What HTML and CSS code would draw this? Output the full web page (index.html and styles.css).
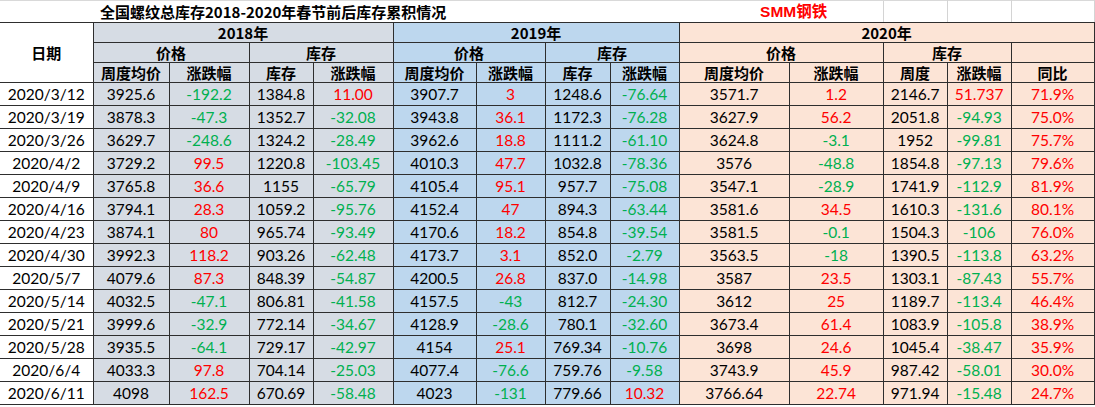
FILE: index.html
```html
<!DOCTYPE html>
<html lang="zh-CN">
<head>
<meta charset="utf-8">
<title>全国螺纹总库存2018-2020年春节前后库存累积情况</title>
<link rel="stylesheet" href="styles.css">
</head>
<body>
<table class="sheet">
  <colgroup>
    <col class="c-date">
    <col class="c1"><col class="c2"><col class="c3"><col class="c4">
    <col class="c5"><col class="c6"><col class="c7"><col class="c8">
    <col class="c9"><col class="c10"><col class="c11"><col class="c12"><col class="c13">
  </colgroup>
  <thead>
    <tr class="r-title">
      <td class="t-blank"></td>
      <td class="t-title" colspan="8">全国螺纹总库存2018-2020年春节前后库存累积情况</td>
      <td class="t-brand" colspan="2">SMM钢铁</td>
      <td class="t-grid"></td>
      <td class="t-grid"></td>
      <td class="t-grid"></td>
    </tr>
    <tr class="r-head">
      <th class="h-date" rowspan="3">日期</th>
      <th class="y18" colspan="4">2018年</th>
      <th class="y19" colspan="4">2019年</th>
      <th class="y20" colspan="5">2020年</th>
    </tr>
    <tr class="r-head">
      <th class="y18" colspan="2">价格</th>
      <th class="y18" colspan="2">库存</th>
      <th class="y19" colspan="2">价格</th>
      <th class="y19" colspan="2">库存</th>
      <th class="y20" colspan="2">价格</th>
      <th class="y20" colspan="2">库存</th>
      <th class="y20"></th>
    </tr>
    <tr class="r-head">
      <th class="y18">周度均价</th><th class="y18">涨跌幅</th><th class="y18">库存</th><th class="y18">涨跌幅</th>
      <th class="y19">周度均价</th><th class="y19">涨跌幅</th><th class="y19">库存</th><th class="y19">涨跌幅</th>
      <th class="y20">周度均价</th><th class="y20">涨跌幅</th><th class="y20">周度</th><th class="y20">涨跌幅</th><th class="y20">同比</th>
    </tr>
  </thead>
  <tbody>
    <tr><td class="d">2020/3/12</td><td class="y18">3925.6</td><td class="y18 dn">-192.2</td><td class="y18">1384.8</td><td class="y18 up">11.00</td><td class="y19">3907.7</td><td class="y19 up">3</td><td class="y19">1248.6</td><td class="y19 dn">-76.64</td><td class="y20">3571.7</td><td class="y20 up">1.2</td><td class="y20">2146.7</td><td class="y20 up">51.737</td><td class="y20 up">71.9%</td></tr>
    <tr><td class="d">2020/3/19</td><td class="y18">3878.3</td><td class="y18 dn">-47.3</td><td class="y18">1352.7</td><td class="y18 dn">-32.08</td><td class="y19">3943.8</td><td class="y19 up">36.1</td><td class="y19">1172.3</td><td class="y19 dn">-76.28</td><td class="y20">3627.9</td><td class="y20 up">56.2</td><td class="y20">2051.8</td><td class="y20 dn">-94.93</td><td class="y20 up">75.0%</td></tr>
    <tr><td class="d">2020/3/26</td><td class="y18">3629.7</td><td class="y18 dn">-248.6</td><td class="y18">1324.2</td><td class="y18 dn">-28.49</td><td class="y19">3962.6</td><td class="y19 up">18.8</td><td class="y19">1111.2</td><td class="y19 dn">-61.10</td><td class="y20">3624.8</td><td class="y20 dn">-3.1</td><td class="y20">1952</td><td class="y20 dn">-99.81</td><td class="y20 up">75.7%</td></tr>
    <tr><td class="d">2020/4/2</td><td class="y18">3729.2</td><td class="y18 up">99.5</td><td class="y18">1220.8</td><td class="y18 dn">-103.45</td><td class="y19">4010.3</td><td class="y19 up">47.7</td><td class="y19">1032.8</td><td class="y19 dn">-78.36</td><td class="y20">3576</td><td class="y20 dn">-48.8</td><td class="y20">1854.8</td><td class="y20 dn">-97.13</td><td class="y20 up">79.6%</td></tr>
    <tr><td class="d">2020/4/9</td><td class="y18">3765.8</td><td class="y18 up">36.6</td><td class="y18">1155</td><td class="y18 dn">-65.79</td><td class="y19">4105.4</td><td class="y19 up">95.1</td><td class="y19">957.7</td><td class="y19 dn">-75.08</td><td class="y20">3547.1</td><td class="y20 dn">-28.9</td><td class="y20">1741.9</td><td class="y20 dn">-112.9</td><td class="y20 up">81.9%</td></tr>
    <tr><td class="d">2020/4/16</td><td class="y18">3794.1</td><td class="y18 up">28.3</td><td class="y18">1059.2</td><td class="y18 dn">-95.76</td><td class="y19">4152.4</td><td class="y19 up">47</td><td class="y19">894.3</td><td class="y19 dn">-63.44</td><td class="y20">3581.6</td><td class="y20 up">34.5</td><td class="y20">1610.3</td><td class="y20 dn">-131.6</td><td class="y20 up">80.1%</td></tr>
    <tr><td class="d">2020/4/23</td><td class="y18">3874.1</td><td class="y18 up">80</td><td class="y18">965.74</td><td class="y18 dn">-93.49</td><td class="y19">4170.6</td><td class="y19 up">18.2</td><td class="y19">854.8</td><td class="y19 dn">-39.54</td><td class="y20">3581.5</td><td class="y20 dn">-0.1</td><td class="y20">1504.3</td><td class="y20 dn">-106</td><td class="y20 up">76.0%</td></tr>
    <tr><td class="d">2020/4/30</td><td class="y18">3992.3</td><td class="y18 up">118.2</td><td class="y18">903.26</td><td class="y18 dn">-62.48</td><td class="y19">4173.7</td><td class="y19 up">3.1</td><td class="y19">852.0</td><td class="y19 dn">-2.79</td><td class="y20">3563.5</td><td class="y20 dn">-18</td><td class="y20">1390.5</td><td class="y20 dn">-113.8</td><td class="y20 up">63.2%</td></tr>
    <tr><td class="d">2020/5/7</td><td class="y18">4079.6</td><td class="y18 up">87.3</td><td class="y18">848.39</td><td class="y18 dn">-54.87</td><td class="y19">4200.5</td><td class="y19 up">26.8</td><td class="y19">837.0</td><td class="y19 dn">-14.98</td><td class="y20">3587</td><td class="y20 up">23.5</td><td class="y20">1303.1</td><td class="y20 dn">-87.43</td><td class="y20 up">55.7%</td></tr>
    <tr><td class="d">2020/5/14</td><td class="y18">4032.5</td><td class="y18 dn">-47.1</td><td class="y18">806.81</td><td class="y18 dn">-41.58</td><td class="y19">4157.5</td><td class="y19 dn">-43</td><td class="y19">812.7</td><td class="y19 dn">-24.30</td><td class="y20">3612</td><td class="y20 up">25</td><td class="y20">1189.7</td><td class="y20 dn">-113.4</td><td class="y20 up">46.4%</td></tr>
    <tr><td class="d">2020/5/21</td><td class="y18">3999.6</td><td class="y18 dn">-32.9</td><td class="y18">772.14</td><td class="y18 dn">-34.67</td><td class="y19">4128.9</td><td class="y19 dn">-28.6</td><td class="y19">780.1</td><td class="y19 dn">-32.60</td><td class="y20">3673.4</td><td class="y20 up">61.4</td><td class="y20">1083.9</td><td class="y20 dn">-105.8</td><td class="y20 up">38.9%</td></tr>
    <tr><td class="d">2020/5/28</td><td class="y18">3935.5</td><td class="y18 dn">-64.1</td><td class="y18">729.17</td><td class="y18 dn">-42.97</td><td class="y19">4154</td><td class="y19 up">25.1</td><td class="y19">769.34</td><td class="y19 dn">-10.76</td><td class="y20">3698</td><td class="y20 up">24.6</td><td class="y20">1045.4</td><td class="y20 dn">-38.47</td><td class="y20 up">35.9%</td></tr>
    <tr><td class="d">2020/6/4</td><td class="y18">4033.3</td><td class="y18 up">97.8</td><td class="y18">704.14</td><td class="y18 dn">-25.03</td><td class="y19">4077.4</td><td class="y19 dn">-76.6</td><td class="y19">759.76</td><td class="y19 dn">-9.58</td><td class="y20">3743.9</td><td class="y20 up">45.9</td><td class="y20">987.42</td><td class="y20 dn">-58.01</td><td class="y20 up">30.0%</td></tr>
    <tr><td class="d">2020/6/11</td><td class="y18">4098</td><td class="y18 up">162.5</td><td class="y18">670.69</td><td class="y18 dn">-58.48</td><td class="y19">4023</td><td class="y19 dn">-131</td><td class="y19">779.66</td><td class="y19 up">10.32</td><td class="y20">3766.64</td><td class="y20 up">22.74</td><td class="y20">971.94</td><td class="y20 dn">-15.48</td><td class="y20 up">24.7%</td></tr>
  </tbody>
</table>
</body>
</html>
```

FILE: styles.css
```css
html, body {
  margin: 0;
  padding: 0;
  background: #ffffff;
}

.sheet {
  border-collapse: collapse;
  table-layout: fixed;
  width: 1094px;
  font-family: "Lato", "Noto Sans CJK SC", sans-serif;
  font-size: 15px;
  color: #000;
}

.c-date { width: 93px; }
.c1 { width: 76px; }
.c2 { width: 80px; }
.c3 { width: 64px; }
.c4 { width: 80px; }
.c5 { width: 83px; }
.c6 { width: 69px; }
.c7 { width: 65px; }
.c8 { width: 69px; }
.c9 { width: 110px; }
.c10 { width: 94px; }
.c11 { width: 64px; }
.c12 { width: 64px; }
.c13 { width: 83px; }

.sheet td,
.sheet th {
  padding: 0;
  border: 1px solid #2e2e2e;
  text-align: center;
  vertical-align: middle;
  white-space: nowrap;
  overflow: visible;
  line-height: 18px;
}

/* title row */
.r-title td {
  height: 21px;
  border-top: 1px solid #d9d9d9;
  border-left: none;
  border-right: none;
  border-bottom: 1px solid #2e2e2e;
  font-weight: 700;
  font-size: 15px;
}
.t-title {
  text-align: left !important;
  padding-left: 7px !important;
  font-family: "Noto Sans CJK SC", sans-serif;
  font-size: 15px !important;
}
.t-brand {
  text-align: left !important;
  padding-left: 81px !important;
  color: #ff0000;
  font-family: "Liberation Sans", "Noto Sans CJK SC", sans-serif;
  font-size: 15.5px !important;
}
.r-title td.t-grid {
  border-left: 1px solid #d4d4d4;
  border-right: 1px solid #d4d4d4;
}

/* header rows */
.r-head th {
  height: 19px;
  font-family: "Noto Sans CJK SC", sans-serif;
  font-weight: 700;
  font-size: 15px;
  line-height: 18px;
}
.h-date {
  background: #ffffff;
  border-left: none !important;
}

/* body */
.sheet tbody td {
  height: 22px;
  font-size: 15.5px;
}
.sheet tbody td.d {
  background: #ffffff;
  border-left: none;
}

.y18 { background: #d6dce4; }
.y19 { background: #bdd7ee; }
.y20 { background: #fce4d6; }

.up { color: #ff0000; }
.dn { color: #00b050; }
```
